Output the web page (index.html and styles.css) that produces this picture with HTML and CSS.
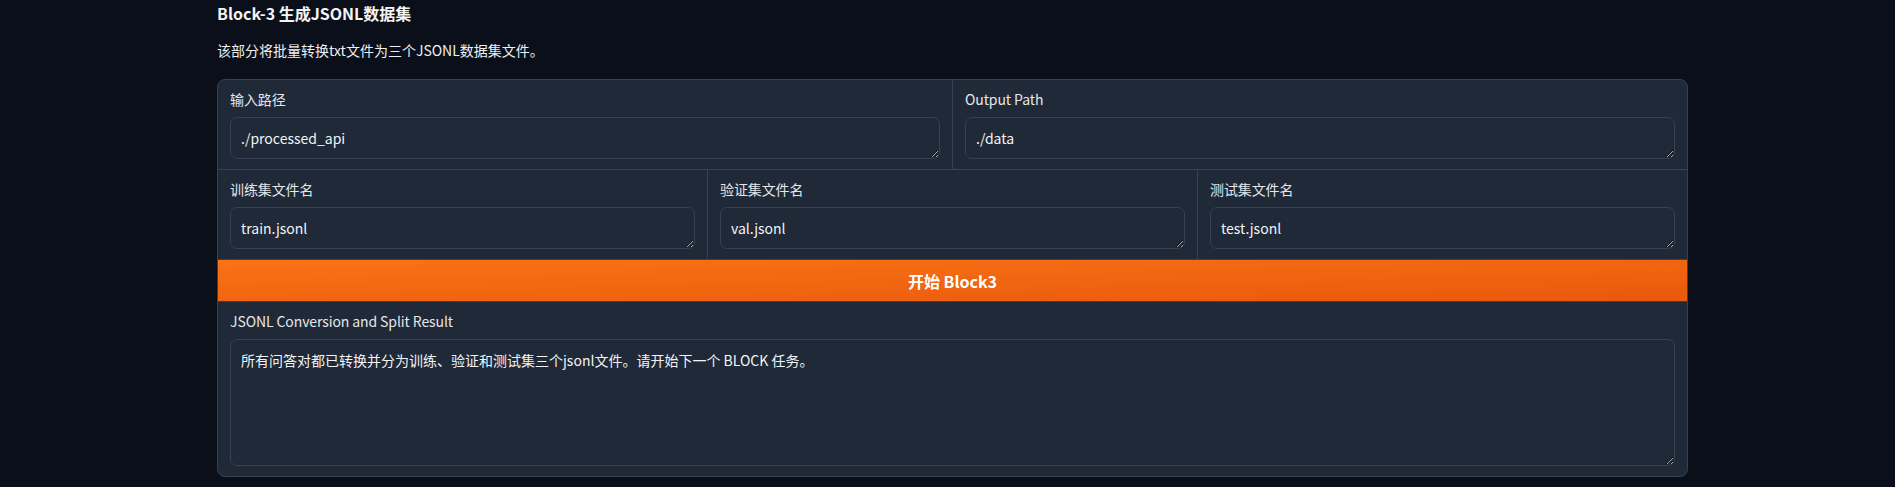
FILE: index.html
```html
<!DOCTYPE html>
<html lang="zh">
<head>
<meta charset="utf-8">
<title>Block-3</title>
<link rel="stylesheet" href="styles.css">
</head>
<body>
<div class="page">
  <h3 class="title">Block-3 生成JSONL数据集</h3>
  <p class="desc">该部分将批量转换txt文件为三个JSONL数据集文件。</p>
  <div class="panel">
    <div class="row">
      <div class="field">
        <label class="field-label">输入路径</label>
        <textarea class="field-input" rows="1">./processed_api</textarea>
      </div>
      <div class="field">
        <label class="field-label">Output Path</label>
        <textarea class="field-input" rows="1">./data</textarea>
      </div>
    </div>
    <div class="row">
      <div class="field">
        <label class="field-label">训练集文件名</label>
        <textarea class="field-input" rows="1">train.jsonl</textarea>
      </div>
      <div class="field">
        <label class="field-label">验证集文件名</label>
        <textarea class="field-input" rows="1">val.jsonl</textarea>
      </div>
      <div class="field">
        <label class="field-label">测试集文件名</label>
        <textarea class="field-input" rows="1">test.jsonl</textarea>
      </div>
    </div>
    <button class="run-btn" type="button">开始 Block3</button>
    <div class="field">
      <label class="field-label">JSONL Conversion and Split Result</label>
      <textarea class="field-input field-input-tall" rows="5">所有问答对都已转换并分为训练、验证和测试集三个jsonl文件。请开始下一个 BLOCK 任务。</textarea>
    </div>
  </div>
</div>
</body>
</html>
```

FILE: styles.css
```css
html, body {
  margin: 0;
  padding: 0;
  background: #0b0f19;
}

body {
  font-family: "Noto Sans CJK SC", "Noto Sans", sans-serif;
  color: #e5e7eb;
}

.page {
  margin-left: 217px;
  width: 1471px;
  padding-top: 1px;
}

.title {
  margin: 0;
  font-size: 16px;
  line-height: 24px;
  font-weight: 700;
  color: #f3f4f6;
}

.desc {
  margin: 15px 0 0;
  font-size: 14px;
  line-height: 21px;
  color: #eef0f3;
}

.panel {
  margin-top: 18px;
  border: 1px solid #374151;
  border-radius: 8px;
  background: #374151;
  overflow: hidden;
  display: flex;
  flex-direction: column;
  gap: 1px;
}

.row {
  display: flex;
  gap: 1px;
}

.row .field {
  flex: 1 1 0;
  min-width: 0;
}

.field {
  background: #1f2937;
  padding: 9px 12px 10px;
  display: flex;
  flex-direction: column;
}

.field-label {
  font-size: 14px;
  line-height: 20px;
  letter-spacing: -0.1px;
  color: #e5e7eb;
  margin-bottom: 8px;
}

.field-input {
  box-sizing: border-box;
  height: 42px;
  width: 100%;
  margin: 0;
  padding: 10px 10px;
  border: 1px solid #374151;
  border-radius: 7px;
  background: #1f2937;
  color: #f3f4f6;
  font-family: "Noto Sans CJK SC", "Noto Sans", sans-serif;
  font-size: 14px;
  line-height: 20px;
  resize: vertical;
  overflow: hidden;
  color-scheme: dark;
  outline: none;
}

.field-input-tall {
  height: 127px;
}

.run-btn {
  display: block;
  width: 100%;
  height: 41px;
  margin: 0;
  border: none;
  background: linear-gradient(to bottom right, #f97316, #ea580c);
  color: #ffffff;
  font-family: "Noto Sans CJK SC", "Noto Sans", sans-serif;
  font-size: 16px;
  font-weight: 700;
  line-height: 20px;
  cursor: pointer;
}
```
